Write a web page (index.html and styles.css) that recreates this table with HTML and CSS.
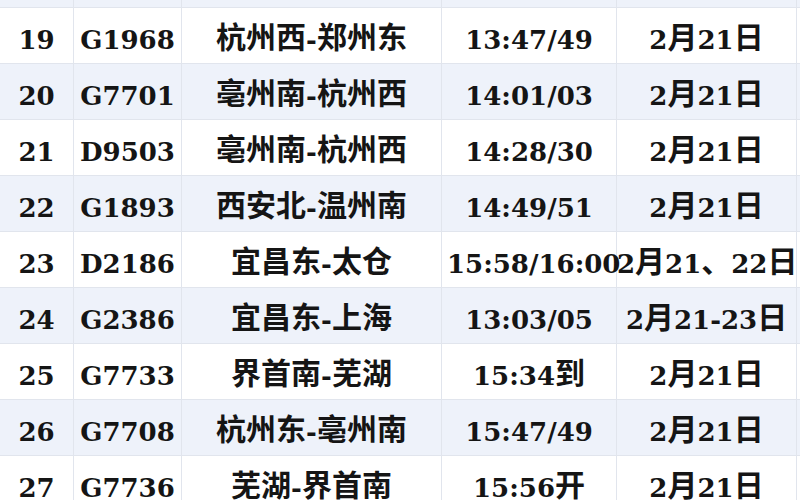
FILE: index.html
```html
<!DOCTYPE html>
<html lang="zh">
<head>
<meta charset="utf-8">
<link rel="stylesheet" href="styles.css">
</head>
<body>
<div class="table">
  <div class="row even partial"><div class="c"></div><div class="c"></div><div class="c"></div><div class="c"></div><div class="c"></div></div>
  <div class="row"><div class="c">19</div><div class="c">G1968</div><div class="c"><span class="zh">杭州西</span>-<span class="zh">郑州东</span></div><div class="c">13:47/49</div><div class="c">2<span class="zh">月</span>21<span class="zh">日</span></div></div>
  <div class="row even"><div class="c">20</div><div class="c">G7701</div><div class="c"><span class="zh">亳州南</span>-<span class="zh">杭州西</span></div><div class="c">14:01/03</div><div class="c">2<span class="zh">月</span>21<span class="zh">日</span></div></div>
  <div class="row"><div class="c">21</div><div class="c">D9503</div><div class="c"><span class="zh">亳州南</span>-<span class="zh">杭州西</span></div><div class="c">14:28/30</div><div class="c">2<span class="zh">月</span>21<span class="zh">日</span></div></div>
  <div class="row even"><div class="c">22</div><div class="c">G1893</div><div class="c"><span class="zh">西安北</span>-<span class="zh">温州南</span></div><div class="c">14:49/51</div><div class="c">2<span class="zh">月</span>21<span class="zh">日</span></div></div>
  <div class="row"><div class="c">23</div><div class="c">D2186</div><div class="c"><span class="zh">宜昌东</span>-<span class="zh">太仓</span></div><div class="c">15:58/16:00</div><div class="c">2<span class="zh">月</span>21<span class="zh">、</span>22<span class="zh">日</span></div></div>
  <div class="row even"><div class="c">24</div><div class="c">G2386</div><div class="c"><span class="zh">宜昌东</span>-<span class="zh">上海</span></div><div class="c">13:03/05</div><div class="c">2<span class="zh">月</span>21-23<span class="zh">日</span></div></div>
  <div class="row"><div class="c">25</div><div class="c">G7733</div><div class="c"><span class="zh">界首南</span>-<span class="zh">芜湖</span></div><div class="c">15:34<span class="zh">到</span></div><div class="c">2<span class="zh">月</span>21<span class="zh">日</span></div></div>
  <div class="row even"><div class="c">26</div><div class="c">G7708</div><div class="c"><span class="zh">杭州东</span>-<span class="zh">亳州南</span></div><div class="c">15:47/49</div><div class="c">2<span class="zh">月</span>21<span class="zh">日</span></div></div>
  <div class="row"><div class="c">27</div><div class="c">G7736</div><div class="c"><span class="zh">芜湖</span>-<span class="zh">界首南</span></div><div class="c">15:56<span class="zh">开</span></div><div class="c">2<span class="zh">月</span>21<span class="zh">日</span></div></div>
</div>
</body>
</html>
```
FILE: styles.css
```css
html, body {
  margin: 0;
  padding: 0;
  background: #ffffff;
}
body {
  width: 800px;
  height: 500px;
  overflow: hidden;
  font-family: "DejaVu Serif", "Noto Sans CJK SC", serif;
  font-weight: bold;
  font-size: 26px;
  color: #151515;
}
.table {
  display: flex;
  flex-direction: column;
}
.row {
  display: grid;
  grid-template-columns: 74px 108px 260px 175px 180px;
  height: 56px;
  border-bottom: 1px solid #e1e5ed;
  box-sizing: border-box;
  background: #ffffff;
}
.row.even {
  background: #eef2fa;
}
.row.partial {
  height: 8px;
}
.c {
  border-right: 1px solid #e1e5ed;
  box-sizing: border-box;
  text-align: center;
  white-space: nowrap;
  line-height: 47px;
  padding-top: 9px;
  overflow: visible;
}
.c:nth-child(4) {
  padding-left: 5px;
  padding-right: 5px;
}
.zh {
  font-family: "Noto Sans CJK SC", serif;
  font-size: 30px;
  font-weight: bold;
  line-height: 30px;
  vertical-align: 1px;
}
```
